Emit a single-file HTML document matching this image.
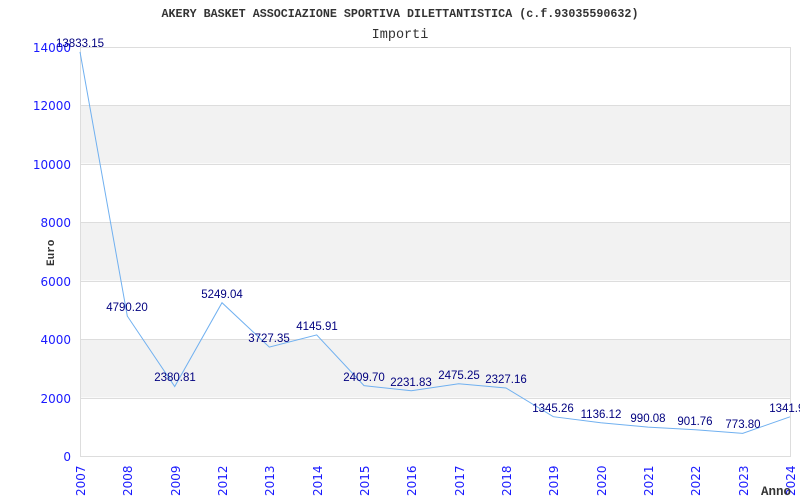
<!DOCTYPE html>
<html><head><style>html,body{margin:0;padding:0;background:#fff}svg{display:block}</style></head><body>
<svg width="800" height="500" xmlns="http://www.w3.org/2000/svg">
<rect width="800" height="500" fill="#fff"/>
<text x="400" y="17" text-anchor="middle" font-family="Liberation Mono, monospace" font-size="11.7" font-weight="bold" fill="#333">AKERY BASKET ASSOCIAZIONE SPORTIVA DILETTANTISTICA (c.f.93035590632)</text>
<text x="400" y="38" text-anchor="middle" font-family="Liberation Mono, monospace" font-size="13.5" fill="#333">Importi</text>
<g fill="#f2f2f2"><rect x="80" y="105" width="710" height="58.4"/><rect x="80" y="222" width="710" height="58.4"/><rect x="80" y="339" width="710" height="58.4"/></g>
<g stroke="#ddd" stroke-width="1"><line x1="80" y1="47.5" x2="790" y2="47.5"/><line x1="80" y1="105.5" x2="790" y2="105.5"/><line x1="80" y1="164.5" x2="790" y2="164.5"/><line x1="80" y1="222.5" x2="790" y2="222.5"/><line x1="80" y1="281.5" x2="790" y2="281.5"/><line x1="80" y1="339.5" x2="790" y2="339.5"/><line x1="80" y1="398.5" x2="790" y2="398.5"/><line x1="80" y1="456.5" x2="790" y2="456.5"/><line x1="80.5" y1="47" x2="80.5" y2="457"/><line x1="790.5" y1="47" x2="790.5" y2="457"/></g>
<g font-family="DejaVu Sans, sans-serif" font-size="12" fill="#1a1aff" text-anchor="end">
<text x="71" y="52">14000</text><text x="71" y="110">12000</text><text x="71" y="169">10000</text><text x="71" y="227">8000</text><text x="71" y="286">6000</text><text x="71" y="344">4000</text><text x="71" y="403">2000</text><text x="71" y="461">0</text>
</g>
<text transform="translate(54,266) rotate(-90)" font-family="Liberation Mono, monospace" font-size="11" font-weight="bold" fill="#333">Euro</text>
<g font-family="DejaVu Sans, sans-serif" font-size="12" fill="#1a1aff">
<text transform="translate(85,496) rotate(-90)">2007</text>
<text transform="translate(132,496) rotate(-90)">2008</text>
<text transform="translate(180,496) rotate(-90)">2009</text>
<text transform="translate(227,496) rotate(-90)">2012</text>
<text transform="translate(274,496) rotate(-90)">2013</text>
<text transform="translate(322,496) rotate(-90)">2014</text>
<text transform="translate(369,496) rotate(-90)">2015</text>
<text transform="translate(416,496) rotate(-90)">2016</text>
<text transform="translate(464,496) rotate(-90)">2017</text>
<text transform="translate(511,496) rotate(-90)">2018</text>
<text transform="translate(558,496) rotate(-90)">2019</text>
<text transform="translate(606,496) rotate(-90)">2020</text>
<text transform="translate(653,496) rotate(-90)">2021</text>
<text transform="translate(700,496) rotate(-90)">2022</text>
<text transform="translate(748,496) rotate(-90)">2023</text>
<text transform="translate(795,496) rotate(-90)">2024</text>
</g>
<text x="761" y="495" font-family="Liberation Mono, monospace" font-size="12.5" font-weight="bold" fill="#333">Anno</text>
<polyline fill="none" stroke="#70b0f0" stroke-width="1" points="80,51.9 127.3,316.1 174.7,386.5 222,302.7 269.3,347.1 316.7,334.9 364,385.6 411.3,390.8 458.7,383.7 506,388 553.3,416.7 600.7,422.8 648,427.1 695.3,429.7 742.7,433.4 790,416.8"/>
<g font-family="Liberation Sans, sans-serif" font-size="11.5" fill="#00007f" text-anchor="middle">
<text x="80" y="47">13833.15</text>
<text x="127" y="311">4790.20</text>
<text x="175" y="381">2380.81</text>
<text x="222" y="298">5249.04</text>
<text x="269" y="342">3727.35</text>
<text x="317" y="330">4145.91</text>
<text x="364" y="381">2409.70</text>
<text x="411" y="386">2231.83</text>
<text x="459" y="379">2475.25</text>
<text x="506" y="383">2327.16</text>
<text x="553" y="412">1345.26</text>
<text x="601" y="418">1136.12</text>
<text x="648" y="422">990.08</text>
<text x="695" y="425">901.76</text>
<text x="743" y="428">773.80</text>
<text x="790" y="412">1341.95</text>
</g>
</svg>
</body></html>
